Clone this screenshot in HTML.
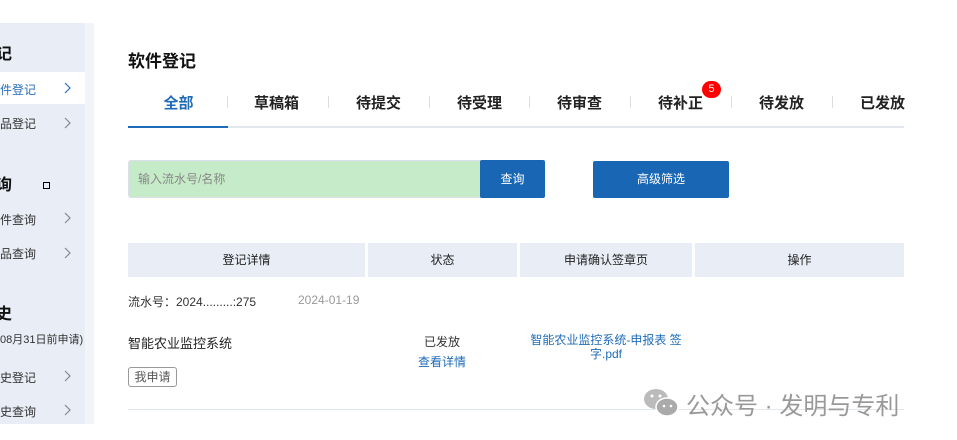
<!DOCTYPE html><html><head><meta charset="utf-8"><style>
*{margin:0;padding:0;box-sizing:border-box}
body{width:957px;height:440px;background:#fff;font-family:"Liberation Sans","Noto Sans CJK SC",sans-serif;position:relative;overflow:hidden;color:#222}
.a{position:absolute}
.side{left:0;top:23px;width:85px;height:401px;background:#e8edf6}
.strip{left:85px;top:23px;width:9px;height:401px;background:#f1f4f9}
.h{font-size:16px;font-weight:bold;color:#111}
.it{font-size:12px;color:#333}
.tab{top:92px;width:97px;text-align:center;font-size:15px;font-weight:bold;color:#222}
.sep{top:96px;width:1px;height:12px;background:#ddd}
.th{top:243px;height:34px;background:#e8edf6;font-size:12px;text-align:center;line-height:34px;color:#222}
.btn{background:#1866b4;color:#fff;font-size:12px;text-align:center;border-radius:2px}
</style></head><body>
<div class="a side"></div><div class="a strip"></div>
<div class="a h" style="left:-4px;top:40px">记</div>
<div class="a" style="left:0;top:72px;width:85px;height:32px;background:#fff"></div>
<div class="a it" style="left:0;top:81px;color:#2a6dbb">件登记</div>
<div class="a it" style="left:0;top:115px">品登记</div>
<div class="a h" style="left:-4px;top:171px">询</div>
<div class="a" style="left:43px;top:182px;width:7px;height:7px;border:1px solid #000"></div>
<div class="a it" style="left:0;top:211px">件查询</div>
<div class="a it" style="left:0;top:245px">品查询</div>
<div class="a h" style="left:-4px;top:300px">史</div>
<div class="a" style="left:0;top:331px;font-size:11px;color:#333">08月31日前申请)</div>
<div class="a it" style="left:0;top:369px">史登记</div>
<div class="a it" style="left:0;top:403px">史查询</div>
<svg class="a" style="left:0;top:0" width="85" height="440" fill="none" stroke-width="1.2">
<path d="M65 83l5 5-5 5" stroke="#2a6dbb"/>
<path d="M65 118l5 5-5 5" stroke="#888"/>
<path d="M65 213l5 5-5 5" stroke="#888"/>
<path d="M65 248l5 5-5 5" stroke="#888"/>
<path d="M65 371l5 5-5 5" stroke="#888"/>
<path d="M65 405l5 5-5 5" stroke="#888"/>
</svg>

<div class="a" style="left:128px;top:47px;font-size:17px;font-weight:bold;color:#111">软件登记</div>
<div class="a tab" style="left:130px;color:#1e6bb8">全部</div>
<div class="a tab" style="left:228px">草稿箱</div>
<div class="a tab" style="left:330px">待提交</div>
<div class="a tab" style="left:431px">待受理</div>
<div class="a tab" style="left:531px">待审查</div>
<div class="a tab" style="left:632px">待补正</div>
<div class="a tab" style="left:733px">待发放</div>
<div class="a tab" style="left:834px">已发放</div>
<div class="a sep" style="left:227px"></div><div class="a sep" style="left:328px"></div><div class="a sep" style="left:429px"></div><div class="a sep" style="left:529px"></div><div class="a sep" style="left:630px"></div><div class="a sep" style="left:731px"></div><div class="a sep" style="left:832px"></div>
<div class="a" style="left:702px;top:81px;width:19px;height:17px;border-radius:9px;background:#f00;color:#fff;font-size:11px;text-align:center;line-height:17px">5</div>
<div class="a" style="left:128px;top:126px;width:776px;height:2px;background:#e3e8ef"></div>
<div class="a" style="left:128px;top:126px;width:100px;height:2px;background:#1e6bb8"></div>

<div class="a" style="left:128px;top:160px;width:353px;height:38px;background:#c6ebc8;border:1px solid #dde;border-right:none;border-radius:3px 0 0 3px;font-size:12px;color:#888;line-height:36px;padding-left:9px">输入流水号/名称</div>
<div class="a btn" style="left:480px;top:160px;width:65px;height:38px;line-height:38px">查询</div>
<div class="a btn" style="left:593px;top:161px;width:136px;height:37px;line-height:37px">高级筛选</div>

<div class="a th" style="left:128px;width:237px">登记详情</div>
<div class="a th" style="left:368px;width:149px">状态</div>
<div class="a th" style="left:520px;width:172px">申请确认签章页</div>
<div class="a th" style="left:695px;width:209px">操作</div>

<div class="a" style="left:128px;top:293px;font-size:12px;color:#333">流水号：2024.........:275</div>
<div class="a" style="left:298px;top:293px;font-size:12px;color:#999">2024-01-19</div>
<div class="a" style="left:128px;top:333px;font-size:13px;color:#222">智能农业监控系统</div>
<div class="a" style="left:128px;top:367px;width:49px;height:20px;border:1px solid #999;border-radius:3px;font-size:12px;color:#555;text-align:center;line-height:18px">我申请</div>
<div class="a" style="left:424px;top:333px;font-size:12px;color:#333">已发放</div>
<div class="a" style="left:418px;top:353px;font-size:12px;color:#1e6bb8">查看详情</div>
<div class="a" style="left:526px;top:333px;width:160px;font-size:12px;color:#1e6bb8;text-align:center;line-height:14px">智能农业监控系统-申报表 签字.pdf</div>
<div class="a" style="left:128px;top:409px;width:776px;height:1px;background:#e3e8ec"></div>

<svg class="a" style="left:642px;top:386px" width="40" height="34" viewBox="0 0 40 34"><ellipse cx="14" cy="13" rx="12" ry="10" fill="#bbb"/><ellipse cx="25" cy="21" rx="11" ry="9" fill="#aaa" stroke="#fff" stroke-width="1.5"/><circle cx="10" cy="10" r="1.5" fill="#fff"/><circle cx="18" cy="10" r="1.5" fill="#fff"/><circle cx="22" cy="20" r="1.3" fill="#fff"/><circle cx="29" cy="20" r="1.3" fill="#fff"/></svg>
<div class="a" style="left:686px;top:386px;font-size:24px;color:#999;white-space:nowrap">公众号 · 发明与专利</div>
</body></html>
